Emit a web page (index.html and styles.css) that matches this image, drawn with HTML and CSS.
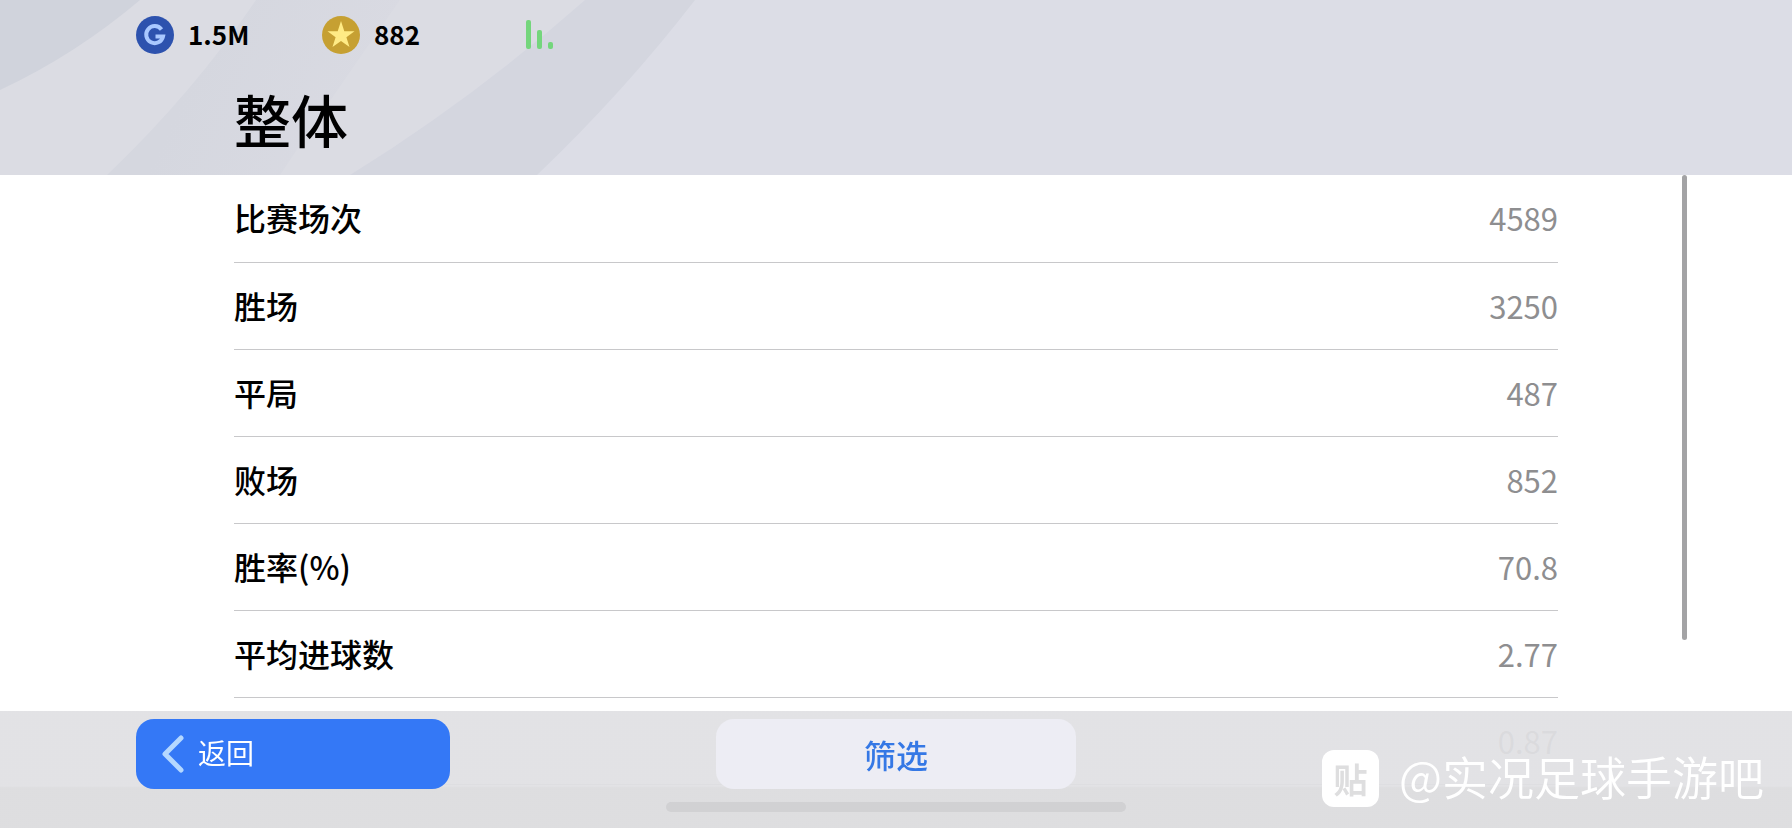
FILE: index.html
```html
<!DOCTYPE html>
<html lang="zh-CN">
<head>
    <meta charset="UTF-8">
    <meta name="viewport" content="width=device-width, initial-scale=1.0">
    <title>整体</title>
    <link rel="stylesheet" href="styles.css">
</head>
<body>
    <header class="header">
        <svg class="header-bg" width="720" height="175" viewBox="0 0 720 175" aria-hidden="true">
            <defs>
                <linearGradient id="band" gradientUnits="userSpaceOnUse" x1="200" y1="60" x2="350" y2="130">
                    <stop offset="0" stop-color="#d5d7df"/>
                    <stop offset="1" stop-color="#d9dae2"/>
                </linearGradient>
            </defs>
            <path d="M0 0H585Q474 98 350 175H0Z" fill="#dbdce3"/>
            <path d="M0 0H140Q75 55 0 90Z" fill="#d0d3dc"/>
            <path d="M256 0H400Q330 100 280 175H107Q193 93 256 0Z" fill="url(#band)"/>
            <path d="M585 0H695Q624 92 537 175H350Q474 98 585 0Z" fill="#d4d6df"/>
        </svg>
        <div class="wallet">
            <div class="coin">
                <svg width="38" height="38" viewBox="0 0 38 38" aria-hidden="true">
                    <circle cx="19" cy="19" r="19" fill="#2d52ae"/>
                    <path d="M25.500 13.500A8.500 8.500 0 1 0 27 20.500H19.500" fill="none" stroke="#a9c8ff" stroke-width="4"/>
                </svg>
                <span>1.5M</span>
            </div>
            <div class="coin">
                <svg width="38" height="38" viewBox="0 0 38 38" aria-hidden="true">
                    <circle cx="19" cy="19" r="19" fill="#c6a032"/>
                    <path d="M19 5L22.300 15.200H32.500L24.400 21.200L27.500 31L19 25L10.500 31L13.600 21.200L5.500 15.200H15.700Z" fill="#ffeb85"/>
                </svg>
                <span>882</span>
            </div>
            <svg class="signal" width="28" height="30" viewBox="0 0 28 30" aria-hidden="true">
                <rect x="0" y="0" width="5" height="29" rx="2" fill="#74d67c"/>
                <rect x="11" y="10" width="5" height="19" rx="2" fill="#74d67c"/>
                <rect x="22" y="22" width="5" height="7" rx="2" fill="#74d67c"/>
            </svg>
        </div>
        <h1 class="title">整体</h1>
    </header>

    <main class="content">
        <table class="stats">
            <tr><th scope="row">比赛场次</th><td>4589</td></tr>
            <tr><th scope="row">胜场</th><td>3250</td></tr>
            <tr><th scope="row">平局</th><td>487</td></tr>
            <tr><th scope="row">败场</th><td>852</td></tr>
            <tr><th scope="row">胜率(%)</th><td>70.8</td></tr>
            <tr><th scope="row">平均进球数</th><td>2.77</td></tr>
            <tr><th scope="row"></th><td>0.87</td></tr>
        </table>
        <div class="scrollbar"></div>
    </main>

    <footer class="footer">
        <div class="actions">
            <button type="button" class="btn btn-back">
                <svg width="22" height="38" viewBox="0 0 22 38" aria-hidden="true">
                    <path d="M19 3L3 19L19 35" fill="none" stroke="#b5d8ff" stroke-width="5" stroke-linecap="round" stroke-linejoin="round"/>
                </svg>
                <span class="btn-text">返回</span>
            </button>
            <button type="button" class="btn btn-filter">筛选</button>
        </div>
        <div class="home-bar"></div>
    </footer>

    <div class="watermark">
        <span class="watermark-logo">贴</span>
        <span class="watermark-name">@实况足球手游吧</span>
    </div>
</body>
</html>
```

FILE: styles.css
```css
* {
    box-sizing: border-box;
}
body {
    margin: 0;
    height: 100vh;
    display: flex;
    flex-direction: column;
    overflow: hidden;
    background-color: #fff;
    color: #000;
    font-family: "Noto Sans CJK SC", "Noto Sans", sans-serif;
}
.header {
    position: relative;
    flex: none;
    height: 175px;
    background-color: #dcdde6;
}
.header-bg {
    position: absolute;
    top: 0;
    left: 0;
}
.wallet {
    position: relative;
    display: flex;
    align-items: center;
    padding: 15px 0 0 136px;
}
.coin {
    display: flex;
    align-items: center;
    gap: 14px;
    width: 186px;
    font-size: 26px;
    line-height: 38px;
    font-weight: 700;
}
.coin span {
    padding-bottom: 2px;
}
.signal {
    margin-left: 18px;
}
.title {
    position: relative;
    margin: 21px 0 0 234px;
    font-size: 57px;
    line-height: 84px;
    font-weight: 500;
}
.content {
    position: relative;
    flex: 1;
    min-height: 0;
    padding: 0 234px;
    overflow: hidden;
}
.stats {
    width: 100%;
    border-collapse: collapse;
    font-size: 32px;
    line-height: 48px;
}
.stats th, .stats td {
    height: 87px;
    padding: 0;
    border-bottom: 1px solid #c8c8ca;
}
.stats th {
    padding-bottom: 2px;
    text-align: left;
    font-weight: 500;
}
.stats td {
    font-size: 31px;
    text-align: right;
    color: #8e8e90;
}
.scrollbar {
    position: absolute;
    top: 0;
    right: 105px;
    width: 5px;
    height: 465px;
    border-radius: 3px;
    background-color: #a3a3a5;
}
.footer {
    position: fixed;
    left: 0;
    right: 0;
    bottom: 0;
    height: 117px;
    padding-top: 8px;
    background: linear-gradient(rgba(224, 224, 227, 0.93) 75px, rgba(220, 220, 222, 0.95) 77px);
}
.actions {
    display: grid;
    grid-template-columns: 1fr 360px 1fr;
    padding: 0 136px;
}
.btn {
    height: 70px;
    padding: 0;
    border: none;
    border-radius: 18px;
    font-family: inherit;
    cursor: pointer;
}
.btn-back {
    display: flex;
    align-items: center;
    gap: 14px;
    width: 314px;
    padding-left: 26px;
    background-color: #3478f6;
    color: #fff;
    font-size: 28px;
}
.btn-text {
    padding-bottom: 4px;
}
.btn-filter {
    background-color: #ededf4;
    color: #3578e5;
    font-size: 32px;
    font-weight: 500;
}
.home-bar {
    width: 460px;
    height: 10px;
    margin: 13px auto 0;
    border-radius: 5px;
    background-color: #d1d1d3;
}
.watermark {
    position: fixed;
    right: 28px;
    bottom: 17px;
    display: flex;
    align-items: center;
    gap: 20px;
    color: #fff;
    font-size: 46px;
    line-height: 60px;
    font-weight: 350;
}
.watermark-name {
    padding-bottom: 6px;
}
.watermark-logo {
    width: 57px;
    height: 57px;
    border-radius: 12px;
    background-color: #fff;
    color: #dededf;
    font-size: 34px;
    line-height: 57px;
    font-weight: 700;
    text-align: center;
}
```
